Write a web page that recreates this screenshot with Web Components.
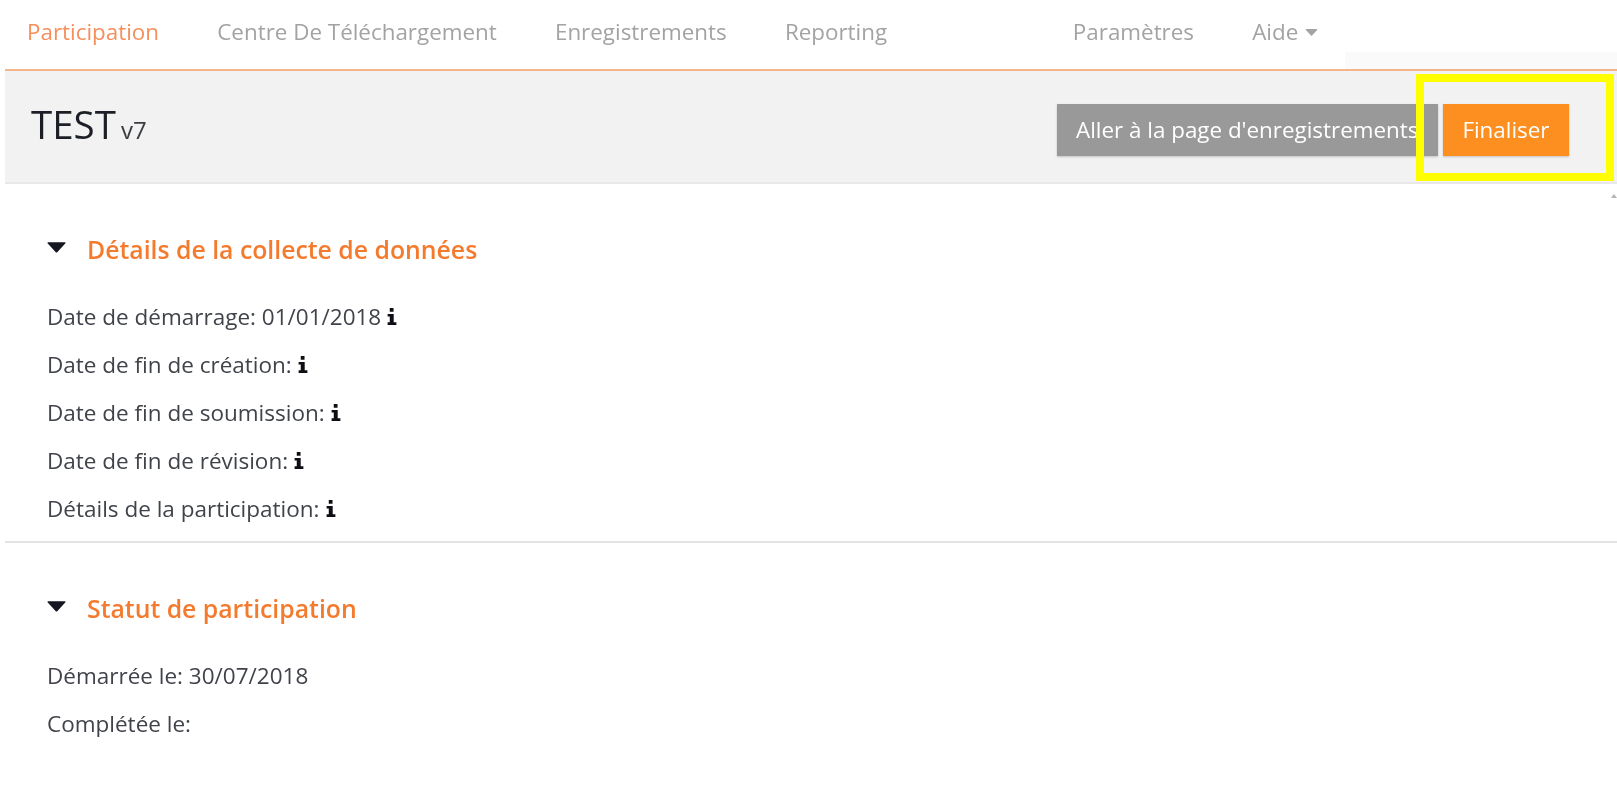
<!DOCTYPE html>
<html lang="fr">
<head>
<meta charset="utf-8">
<title>Participation</title>
<style>
  html, body { margin: 0; background: #fff; }
  body { font-family: "Open Sans", "Liberation Sans", sans-serif; height: 799px; overflow: hidden; filter: blur(.45px); }
</style>
</head>
<body>
<template id="top-nav-tpl">
  <style>
    :host { display: flex; align-items: center; height: 63px; margin-left: 5px; padding: 0 0 6px 22px; position: relative;
      font-size: 22.4px; color: #a3a3a3; border-bottom: 2px solid #f4b48c; }
    .fade { position: absolute; right: 0; top: 52px; bottom: 0; width: 272px; background: #fafafa; }
  </style>
  <slot></slot>
  <span class="fade"></span>
</template>

<template id="nav-link-tpl">
  <style>
    :host { display: inline-flex; align-items: center; gap: 7px; margin-right: 58.2px; position: relative; z-index: 1; }
    :host([active]) { color: #f58f5c; }
    :host([spaced]) { margin-left: 127.5px; }
    svg { display: none; width: 13px; height: 7px; margin-top: 1px; }
    :host([caret]) svg { display: block; }
  </style>
  <slot></slot>
  <svg viewBox="0 0 14 8"><path d="M1 0h12q1 0 .4 1L7.6 7.4q-.6.6-1.2 0L.6 1Q0 0 1 0z" fill="#a3a3a3"/></svg>
</template>

<template id="title-bar-tpl">
  <style>
    :host { display: flex; align-items: center; justify-content: space-between; height: 111px; margin-left: 5px;
      padding: 0 48px 0 26px; background: #f2f2f2; border-bottom: 2px solid #e8e8e8; position: relative; }
    .title { display: flex; align-items: baseline; gap: 5px; font-size: 38.5px; color: #1c1f26; line-height: 1; margin-top: -4px; }
    .title small { font-size: 24px; color: #3a3d42; }
    .actions { display: flex; gap: 5px; margin-top: 6px; }
    .scroll-tick { position: absolute; right: 0; bottom: -16px; width: 0; height: 0;
      border: 3px solid transparent; border-top: 0; border-bottom: 4px solid #b5b5b5; }
  </style>
  <div class="title"><span><slot name="title"></slot></span><small><slot name="version"></slot></small></div>
  <div class="actions"><slot></slot></div>
  <span class="scroll-tick"></span>
</template>

<template id="action-button-tpl">
  <style>
    :host { display: block; height: 52px; line-height: 52px; padding: 0 19.5px; font-size: 22.4px; color: #fff;
      background: #999; box-shadow: 0 1px 2px rgba(0,0,0,.2); white-space: nowrap; }
    :host([primary]) { background: #fd8f20; }
  </style>
  <slot></slot>
</template>

<template id="info-section-tpl">
  <style>
    :host { display: block; margin-left: 5px; padding: 0 0 0 42px; }
    :host([divided]) { border-bottom: 2px solid #e4e4e4; }
    header { display: flex; align-items: center; height: 48px; gap: 21px; font-size: 24.8px; font-weight: 600; color: #f47b2e; margin-bottom: 19px; }
    svg { width: 19px; height: 11px; margin-top: -3px; flex: none; }
    .rows { display: flex; flex-direction: column; }
  </style>
  <header>
    <svg viewBox="0 0 20 11"><path d="M1.2 0h17.6q1.4 0 .6 1.1l-8.6 9.4q-.8.7-1.6 0L.6 1.1Q-.2 0 1.2 0z" fill="#14171f"/></svg>
    <span><slot name="heading"></slot></span>
  </header>
  <div class="rows"><slot></slot></div>
</template>

<template id="info-row-tpl">
  <style>
    :host { display: flex; align-items: center; gap: 6px; height: 48px; font-size: 22.5px; color: #40444a; }
    svg { display: none; width: 10px; height: 17px; flex: none; margin-top: 0; }
    :host([info]) svg { display: block; }
  </style>
  <span><slot></slot></span>
  <svg viewBox="0 0 11 19"><path fill="#0d0f14" d="M3 0h4.2v4.2H3zM.6 6.6h6.8v9.4H10.4V19H.6v-3H3V9.6H.6z"/></svg>
</template>

<template id="highlight-box-tpl">
  <style>
    :host { position: absolute; left: 1416px; top: 74px; width: 198px; height: 107px; box-sizing: border-box;
      border: 8px solid #ffff00; z-index: 5; }
  </style>
</template>

<top-nav>
  <nav-link active>Participation</nav-link>
  <nav-link>Centre De Téléchargement</nav-link>
  <nav-link>Enregistrements</nav-link>
  <nav-link>Reporting</nav-link>
  <nav-link spaced>Paramètres</nav-link>
  <nav-link caret>Aide</nav-link>
</top-nav>
<title-bar>
  <span slot="title">TEST</span>
  <span slot="version">v7</span>
  <action-button>Aller à la page d'enregistrements</action-button>
  <action-button primary>Finaliser</action-button>
</title-bar>
<info-section divided style="padding-top:41px;padding-bottom:9px">
  <span slot="heading">Détails de la collecte de données</span>
  <info-row info>Date de démarrage: 01/01/2018</info-row>
  <info-row info>Date de fin de création:</info-row>
  <info-row info>Date de fin de soumission:</info-row>
  <info-row info>Date de fin de révision:</info-row>
  <info-row info>Détails de la participation:</info-row>
</info-section>
<info-section style="padding-top:41px">
  <span slot="heading">Statut de participation</span>
  <info-row>Démarrée le: 30/07/2018</info-row>
  <info-row>Complétée le:</info-row>
</info-section>
<highlight-box></highlight-box>

<script>
  function stamp(tag) {
    const tpl = document.getElementById(tag + "-tpl");
    customElements.define(tag, class extends HTMLElement {
      constructor() {
        super();
        this.attachShadow({ mode: "open" }).appendChild(tpl.content.cloneNode(true));
      }
    });
  }
  ["top-nav", "nav-link", "title-bar", "action-button", "info-section", "info-row", "highlight-box"].forEach(stamp);
</script>
</body>
</html>
